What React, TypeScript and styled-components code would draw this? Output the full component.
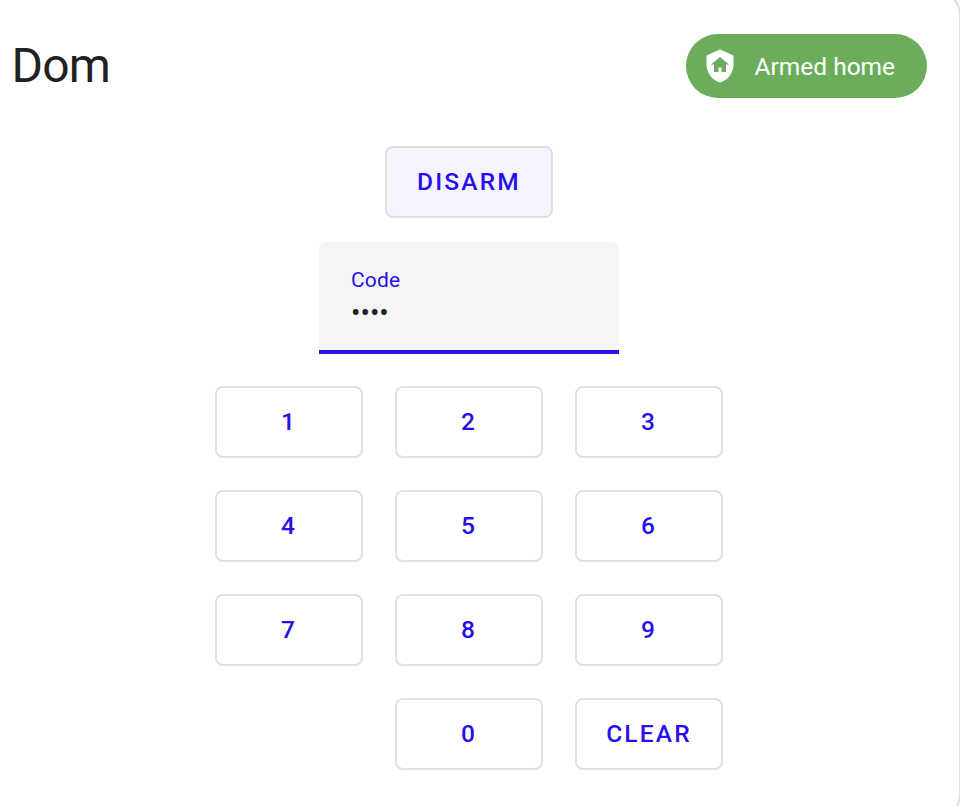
import React from "react";
import styled, { createGlobalStyle } from "styled-components";

const GlobalStyle = createGlobalStyle`
  * { box-sizing: border-box; }
  html, body { margin: 0; height: 100%; overflow: hidden; }
  body {
    background: #fafafa;
    color: #212121;
    font-family: Roboto, sans-serif;
    -webkit-font-smoothing: antialiased;
  }
  #root { height: 100%; overflow: hidden; }
`;

const Card = styled.main`
  width: 985px;
  height: 827px;
  margin: -9px 0 0 -24px;
  padding: 41px 32px 0 34px;
  border: 2px solid #e0e0e0;
  border-radius: 24px;
  background: #fff;
`;

const Header = styled.header`
  display: flex;
  align-items: center;
  justify-content: space-between;
  height: 64px;
`;

const Title = styled.h1`
  margin: 0 0 0 -0.5px;
  font-size: 48px;
  font-weight: 400;
  line-height: 64px;
  letter-spacing: -0.8px;
`;

const StateChip = styled.div`
  display: flex;
  align-items: center;
  gap: 16.5px;
  width: 241px;
  height: 64px;
  padding-left: 16px;
  border-radius: 32px;
  background: #6cad5c;
  color: #fff;
  font-size: 24.5px;
  white-space: nowrap;
`;

const ShieldIcon = styled.svg`
  width: 36px;
  height: 36px;
  flex: none;
  fill: currentColor;
`;

const Panel = styled.section`
  display: flex;
  flex-direction: column;
  align-items: center;
  width: 508px;
  margin: 48px 0 0 203px;
`;

const OutlinedButton = styled.button<{ $filled?: boolean }>`
  width: ${(p) => (p.$filled ? "168px" : "148px")};
  height: 72px;
  padding: 0;
  border: 2px solid #e0e0e0;
  border-radius: 8px;
  background: ${(p) => (p.$filled ? "#f5f3fe" : "#fff")};
  color: #280fea;
  font: 500 24.5px/68px Roboto, sans-serif;
  letter-spacing: 2.1875px;
`;

const CodeField = styled.label`
  display: flex;
  flex-direction: column;
  width: 300px;
  height: 112px;
  margin: 24px 0 32px;
  padding: 26px 32px 0;
  border-bottom: 4px solid #280fea;
  border-radius: 8px 8px 0 0;
  background: #f5f5f5;
`;

const FieldLabel = styled.span`
  color: #280fea;
  font-size: 21px;
  line-height: 25px;
  letter-spacing: 0.19px;
`;

const CodeInput = styled.input`
  width: 100%;
  height: 32px;
  margin-top: 4px;
  padding: 0;
  border: 0;
  outline: 0;
  background: transparent;
  color: #212121;
  font: 400 28px/32px Roboto, sans-serif;
`;

const Keypad = styled.div`
  display: grid;
  grid-template-columns: repeat(3, 148px);
  gap: 32px;
`;

const EmptyKey = styled.span``;

const keys = ["1", "2", "3", "4", "5", "6", "7", "8", "9", "", "0", "CLEAR"];

export default function App() {
  return (
    <>
      <GlobalStyle />
      <Card>
        <Header>
          <Title>Dom</Title>
          <StateChip>
            <ShieldIcon viewBox="0 0 24 24" aria-hidden="true">
              <path d="M11,13H13V16H16V11H18L12,6L6,11H8V16H11V13M12,1L21,5V11C21,16.55 17.16,21.74 12,23C6.84,21.74 3,16.55 3,11V5L12,1Z" />
            </ShieldIcon>
            Armed home
          </StateChip>
        </Header>
        <Panel>
          <OutlinedButton $filled>DISARM</OutlinedButton>
          <CodeField>
            <FieldLabel>Code</FieldLabel>
            <CodeInput type="password" value="1234" readOnly />
          </CodeField>
          <Keypad>
            {keys.map((key) =>
              key ? <OutlinedButton key={key}>{key}</OutlinedButton> : <EmptyKey key="empty" />
            )}
          </Keypad>
        </Panel>
      </Card>
    </>
  );
}
